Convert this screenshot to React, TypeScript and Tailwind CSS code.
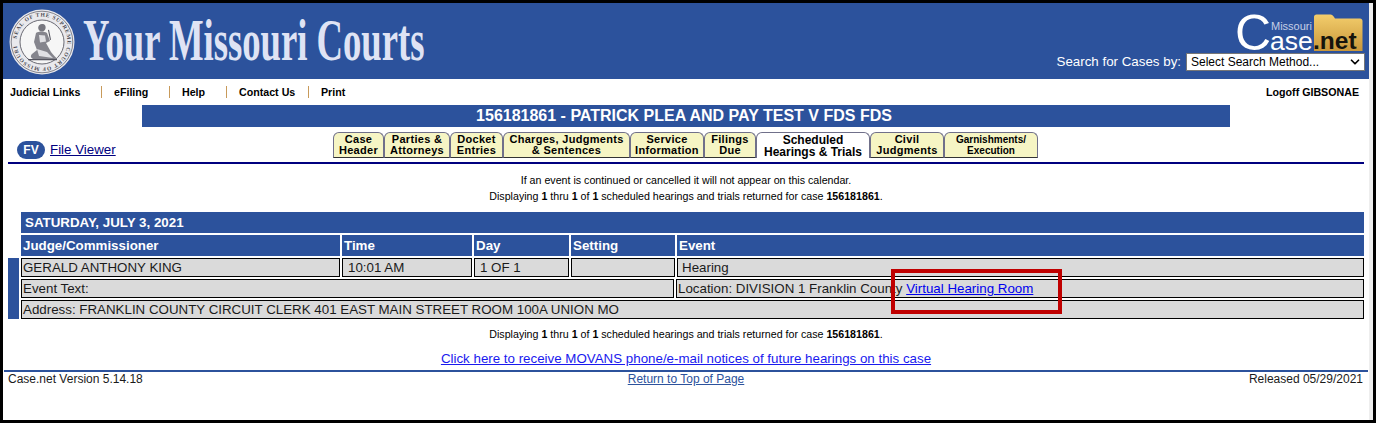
import React from 'react';
import { ChevronDown } from 'lucide-react';

const ARIAL = 'font-["Liberation_Sans",Arial,sans-serif]';

const Seal = () => (
  <svg width="66" height="66" viewBox="0 0 66 66" className="shrink-0">
    <defs>
      <path id="sealArc" d="M33 33 m-25.500 0 a25.500 25.500 0 1 1 51 0 a25.500 25.500 0 1 1 -51 0" />
    </defs>
    <circle cx="33" cy="33" r="32.500" fill="#e9e9ed" />
    <circle cx="33" cy="33" r="30.800" fill="none" stroke="#6a6a74" strokeWidth="0.8" />
    <circle cx="33" cy="33" r="22" fill="#f6f6f6" stroke="#5a5a64" strokeWidth="0.9" />
    <text fontSize="5.500" fontWeight="700" fill="#4a4a52" fontFamily="Liberation Serif, serif" letterSpacing="0.8">
      <textPath href="#sealArc" startOffset="2%">SEAL OF THE SUPREME COURT OF MISSOURI</textPath>
    </text>
    {/* seated figure */}
    <path d="M33 15c3 0 4 2 3.500 4.500-.4 2-2 3-3.500 3-2.500 0-4-2-3.800-4 .2-2 1.800-3.500 3.800-3.500z" fill="#77777f" />
    <path d="M27 24c3-2 8-2 11 0l3 8-4 2 5 9c2 3 5 5 6 7H24c-2-1-3-3-1-5l5-4-3-8z" fill="#85858d" />
    <path d="M30 26l6 .500 1 6-6 1zM28 40l10 3 6 6-14-2z" fill="#e0e0e4" />
    <path d="M39 21l2 10 1-.3-2-10zM19 50h29v1.300H19z" fill="#55555f" />
  </svg>
);

const CaseNetLogo = () => (
  <div className="relative w-[125px] h-[37px] mr-[2px] shrink-0">
    <svg width="50" height="37" viewBox="0 0 50 37" className="absolute left-[75px] top-0">
      <defs>
        <linearGradient id="folderFill" x1="0" y1="0" x2="0" y2="1">
          <stop offset="0" stopColor="#f3cd6c" />
          <stop offset="1" stopColor="#c9973a" />
        </linearGradient>
      </defs>
      <path d="M1 3c0-1.500 1-2.500 2.500-2.500h14c1.500 0 2.500 1 3.500 2.500l1 1.500h25c1.500 0 2.500 1 2.500 2.500V37H1z" fill="url(#folderFill)" />
    </svg>
    <span className={`absolute left-[-3px] top-[-9px] text-[50px] leading-[56px] text-white ${ARIAL}`}>C</span>
    <span className={`absolute left-[33px] top-[6px] text-[11px] leading-[13px] text-[#c5cfe6] ${ARIAL}`}>Missouri</span>
    <span className={`absolute left-[32px] top-[13px] text-[26.500px] leading-[28px] text-white ${ARIAL}`}>ase</span>
    <span className={`absolute left-[75px] top-[14px] text-[24.500px] leading-[26px] font-bold text-[#16140c] ${ARIAL}`}>.net</span>
  </div>
);

const Header = () => (
  <div className="relative h-[76px] bg-[#2c529c] flex shrink-0">
    <div className="pl-[6px] pt-[6px]">
      <Seal />
    </div>
    <h1 className="ml-[8px] mt-[9px] h-[56px] w-[342px] text-[#dfe3f4] font-['Liberation_Serif',serif] font-bold text-[60px] leading-[56px] whitespace-nowrap origin-left scale-x-[0.611]">
      Your Missouri Courts
    </h1>
    <div className="ml-auto pr-[4px] pt-[11px] flex flex-col items-end">
      <CaseNetLogo />
      <div className="mt-[2px] flex items-center gap-[5px]">
        <span className={`text-[13.330px] leading-[18px] text-white ${ARIAL}`}>Search for Cases by:</span>
        <div className="w-[179px] h-[18px] bg-white border border-[#767676] flex items-center justify-between pl-[4px] pr-[2px]">
          <span className={`text-[12px] leading-[16px] text-black ${ARIAL}`}>Select Search Method...</span>
          <ChevronDown size={14} strokeWidth={3} className="text-black" />
        </div>
      </div>
    </div>
  </div>
);

const NavLink = ({ label, w }: { label: string; w: string }) => (
  <span className={`${w} text-[10.670px] font-bold text-black whitespace-nowrap`}>{label}</span>
);

const NavSep = () => <span className="w-px h-[12px] bg-[#c89a5a] mr-[12px]" />;

const NavBar = () => (
  <div className={`h-[26px] flex items-center pl-[7px] pr-[10px] shrink-0 ${ARIAL}`}>
    <NavLink label="Judicial Links" w="w-[91px]" />
    <NavSep />
    <NavLink label="eFiling" w="w-[55px]" />
    <NavSep />
    <NavLink label="Help" w="w-[44px]" />
    <NavSep />
    <NavLink label="Contact Us" w="w-[69px]" />
    <NavSep />
    <NavLink label="Print" w="w-[40px]" />
    <span className="ml-auto text-[10.670px] font-bold text-black">Logoff GIBSONAE</span>
  </div>
);

const TABS = [
  { top: 'Case', bottom: 'Header', w: 'w-[51px]' },
  { top: 'Parties &', bottom: 'Attorneys', w: 'w-[66px]' },
  { top: 'Docket', bottom: 'Entries', w: 'w-[53px]' },
  { top: 'Charges, Judgments', bottom: '& Sentences', w: 'w-[127px]' },
  { top: 'Service', bottom: 'Information', w: 'w-[74px]' },
  { top: 'Filings', bottom: 'Due', w: 'w-[52px]' },
  { top: 'Scheduled', bottom: 'Hearings & Trials', w: 'w-[114px]', active: true },
  { top: 'Civil', bottom: 'Judgments', w: 'w-[74px]' },
  { top: 'Garnishments/', bottom: 'Execution', w: 'w-[94px]', small: true },
];

const TabRow = () => (
  <div className="h-[30px] mt-[5px] mx-[5px] flex items-end border-b-2 border-[#00007f] box-content shrink-0">
    <div className="w-[325px] h-full flex items-center pt-[6px] pl-[9px] gap-[5px]">
      <span className={`w-[28px] h-[18px] rounded-full bg-[#2c529c] text-white text-[12px] font-bold flex items-center justify-center ${ARIAL}`}>FV</span>
      <a className={`text-[13.330px] leading-[16px] text-[#00007f] underline ${ARIAL}`}>File Viewer</a>
    </div>
    <div className="flex h-[26px] mb-[4px]">
      {TABS.map((t) => (
        <div
          key={t.top}
          className={`${t.w} rounded-t-[6px] border-t border-x border-[#70708a] flex flex-col items-center justify-center text-black font-bold whitespace-nowrap ${ARIAL} ${t.small ? 'text-[10px] leading-[11px]' : t.active ? 'text-[12px] leading-[12px]' : 'text-[11px] leading-[11px] tracking-[0.3px]'} ${t.active ? 'bg-white' : 'bg-[#f6f5c4] border-b border-b-[#333]'}`}
        >
          <span>{t.top}</span>
          <span>{t.bottom}</span>
        </div>
      ))}
    </div>
  </div>
);

const Displaying = () => (
  <p className="text-[10.670px] leading-[16px] text-black text-center">
    Displaying <b>1</b> thru <b>1</b> of <b>1</b> scheduled hearings and trials returned for case <b>156181861</b>.
  </p>
);

const HeadCell = ({ w, children }: { w: string; children?: React.ReactNode }) => (
  <div className={`${w} h-[21px] bg-[#2c529c] text-white text-[13.330px] font-bold leading-[21px] pl-[2px]`}>{children}</div>
);

const BodyCell = ({ w, children, pl = 'pl-[1px]' }: { w: string; children?: React.ReactNode; pl?: string }) => (
  <div className={`${w} h-[19px] bg-[#dadada] border border-black text-[13.330px] leading-[17px] text-[#1a1a1a] whitespace-nowrap ${pl}`}>{children}</div>
);

const Calendar = () => (
  <div className="relative mt-[8px] ml-[5px] w-[1356px] flex flex-col shrink-0">
    <div className="ml-[13px] h-[21px] bg-[#2c529c] text-white text-[13.330px] font-bold leading-[21px] pl-[4px]">SATURDAY, JULY 3, 2021</div>
    <div className="ml-[13px] mt-[2px] flex gap-[2px]">
      <HeadCell w="w-[319px]">Judge/Commissioner</HeadCell>
      <HeadCell w="w-[130px]">Time</HeadCell>
      <HeadCell w="w-[95px]">Day</HeadCell>
      <HeadCell w="w-[104px]">Setting</HeadCell>
      <HeadCell w="flex-1">Event</HeadCell>
    </div>
    <div className="mt-[2px] flex gap-[2px]">
      <div className="w-[11px] bg-[#2c529c]" />
      <div className="flex-1 flex flex-col gap-[2px]">
        <div className="flex gap-[2px]">
          <BodyCell w="w-[319px]">GERALD ANTHONY KING</BodyCell>
          <BodyCell w="w-[130px]" pl="pl-[5px]">10:01 AM</BodyCell>
          <BodyCell w="w-[95px]" pl="pl-[5px]">1 OF 1</BodyCell>
          <BodyCell w="w-[104px]" />
          <BodyCell w="flex-1" pl="pl-[4px]">Hearing</BodyCell>
        </div>
        <div className="flex gap-[2px]">
          <BodyCell w="w-[653px]">Event Text:</BodyCell>
          <BodyCell w="flex-1" pl="pl-[1px]">
            Location: DIVISION 1 Franklin County <a className="text-[#0000ee] underline">Virtual Hearing Room</a>
          </BodyCell>
        </div>
        <BodyCell w="w-full">Address: FRANKLIN COUNTY CIRCUIT CLERK 401 EAST MAIN STREET ROOM 100A UNION MO</BodyCell>
      </div>
    </div>
    {/* annotation box over the link */}
    <div className="absolute left-[883px] top-[57px] w-[171px] h-[45px] border-[4px] border-[#c00000]" />
  </div>
);

export default function App() {
  return (
    <div className="w-[1376px] h-[423px] bg-black pt-[3px] pl-[3px] pr-[3px] pb-[3px] overflow-hidden">
      <div className={`h-full bg-white border-r-[4px] border-[#eeeeee] flex flex-col ${ARIAL}`}>
        <Header />
        <NavBar />
        <div className="ml-[139px] w-[1088px] h-[22px] bg-[#2c529c] text-white text-[16px] font-bold leading-[22px] text-center pr-[4px] shrink-0">
          156181861 - PATRICK PLEA AND PAY TEST V FDS FDS
        </div>
        <TabRow />
        <div className="mt-[8px] flex flex-col gap-0 shrink-0">
          <p className="text-[10.670px] leading-[16px] text-black text-center">If an event is continued or cancelled it will not appear on this calendar.</p>
          <Displaying />
        </div>
        <Calendar />
        <div className="mt-[7px] shrink-0">
          <Displaying />
        </div>
        <div className="mt-[9px] text-center text-[13.330px] leading-[16px] shrink-0">
          <a className="text-[#1a1aee] underline">Click here to receive MOVANS phone/e-mail notices of future hearings on this case</a>
        </div>
        <div className="mt-[3px] mx-[1px] border-t-2 border-[#2c529c] grid grid-cols-3 px-[4px] text-[12px] leading-[14px] text-[#1a1a1a] shrink-0">
          <span>Case.net Version 5.14.18</span>
          <a className="text-center text-[#2c529c] underline">Return to Top of Page</a>
          <span className="text-right pr-[1px]">Released 05/29/2021</span>
        </div>
      </div>
    </div>
  );
}
